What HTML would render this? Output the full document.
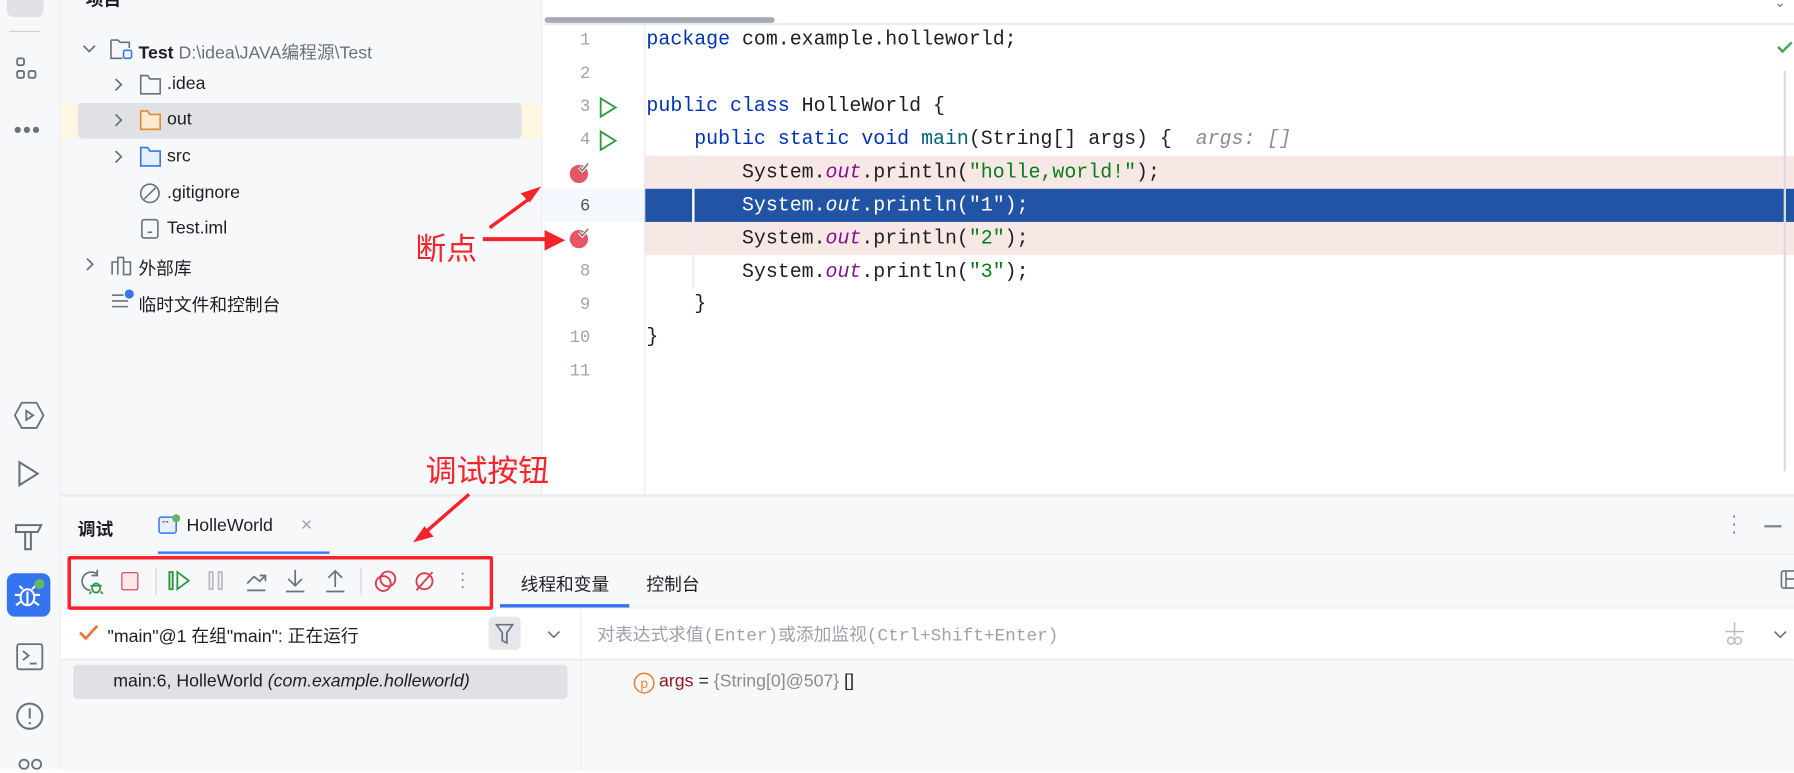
<!DOCTYPE html>
<html><head><meta charset="utf-8"><style>
html,body{margin:0;padding:0;width:1794px;height:769px;overflow:hidden;background:#fff}
#w{position:absolute;left:0;top:0;width:1568px;height:672px;transform:scale(1.14413);transform-origin:0 0;font-family:"Liberation Sans","Noto Sans CJK SC",sans-serif;color:#1e1f22}
.a{position:absolute}
.ui{font-size:15.5px;white-space:nowrap}
.code{font-family:"Liberation Mono","Noto Sans CJK SC",monospace;font-size:17.4px;white-space:pre}
.kw{color:#0033b3}.str{color:#067d17}.it{color:#871094;font-style:italic}
.ln{position:absolute;width:40px;text-align:right;left:476px;font-family:"Liberation Mono",monospace;font-size:15px;color:#a0a4ab}
svg{position:absolute;overflow:visible}
</style></head><body><div id="w">
<!-- left toolbar -->
<div class="a" style="left:0;top:0;width:52px;height:672px;background:#f7f8fa;border-right:1px solid #ebecf0"></div>
<div class="a" style="left:6px;top:-12px;width:32px;height:27px;background:#dfe1e5;border-radius:6px"></div>
<div class="a" style="left:8px;top:27px;width:27px;height:1px;background:#d0d2d6"></div>
<svg style="left:14px;top:50px" width="22" height="22" fill="none" stroke="#6c707e" stroke-width="1.6"><rect x="1" y="1" width="6" height="6" rx="1.5"/><rect x="1" y="12" width="6" height="6" rx="1.5"/><rect x="11" y="12" width="6" height="6" rx="1.5"/></svg>
<div class="a" style="left:12px;top:103px;font-size:20px;color:#6c707e;letter-spacing:1px">•••</div>
<svg style="left:13px;top:351px" width="26" height="24" fill="none" stroke="#6c707e" stroke-width="1.6"><path d="M6 1h13l6 11-6 11H6L0 12z"/><path d="M10 8l6 4-6 4z"/></svg>
<svg style="left:15px;top:403px" width="20" height="22" fill="none" stroke="#6c707e" stroke-width="1.8"><path d="M2 1l16 10L2 21z"/></svg>
<svg style="left:13px;top:455px" width="26" height="26" fill="none" stroke="#6c707e" stroke-width="1.8"><path d="M1 4h22l-3 6H1zM9 10v15h5V10"/></svg>
<div class="a" style="left:6px;top:501px;width:38px;height:38px;background:#3574f0;border-radius:7px"></div>
<svg style="left:13px;top:508px" width="24" height="24" fill="none" stroke="#fff" stroke-width="1.8"><ellipse cx="11" cy="14" rx="6" ry="7"/><path d="M5 12H0M17 12h5M5 18l-4 3M17 18l4 3M7 7L4 4M15 7l3-3M11 9v12"/></svg>
<div class="a" style="left:30px;top:506px;width:9px;height:9px;background:#5fb865;border-radius:50%"></div>
<svg style="left:14px;top:562px" width="24" height="24" fill="none" stroke="#6c707e" stroke-width="1.6"><rect x="1" y="1" width="22" height="22" rx="2"/><path d="M6 7l5 4-5 4M12 18h6"/></svg>
<svg style="left:13px;top:613px" width="26" height="26" fill="none" stroke="#6c707e" stroke-width="1.8"><circle cx="13" cy="13" r="11"/><path d="M13 6v9M13 18v2"/></svg>
<svg style="left:15px;top:662px" width="24" height="14" fill="none" stroke="#6c707e" stroke-width="1.6"><circle cx="6" cy="6" r="4"/><circle cx="17" cy="6" r="4"/></svg>

<!-- project panel -->
<div class="a" style="left:53px;top:0;width:420px;height:432px;background:#f7f8fa;border-right:1px solid #ebecf0"></div>
<div class="a" style="left:53px;top:90px;width:420px;height:31px;background:#fdf7e2"></div>
<div class="a" style="left:68px;top:90px;width:388px;height:31px;background:#dfe1e5;border-radius:4px"></div>
<div class="a ui" style="left:75px;top:-12px;font-weight:bold">项目</div>
<svg style="left:72px;top:38px" width="12" height="10" fill="none" stroke="#6c707e" stroke-width="1.5"><path d="M1 2l5 5 5-5"/></svg>
<svg style="left:96px;top:33px" width="22" height="22" fill="none" stroke="#6c707e" stroke-width="1.4"><path d="M1 2h6l2 2h8v5M1 2v16h10"/><rect x="12" y="11" width="7" height="7" rx="1.5" stroke="#3574f0"/></svg>
<div class="a ui" style="left:121px;top:34px"><b>Test</b> <span style="color:#6c707e">D:\idea\JAVA编程源\Test</span></div>
<svg style="left:99px;top:68px" width="8" height="12" fill="none" stroke="#6c707e" stroke-width="1.5"><path d="M2 1l5 5-5 5"/></svg>
<svg style="left:122px;top:65px" width="20" height="18" fill="none" stroke="#6c707e" stroke-width="1.4"><path d="M1 1h6l2 3h9v13H1z"/></svg>
<div class="a ui" style="left:146px;top:65px">.idea</div>
<svg style="left:99px;top:99px" width="8" height="12" fill="none" stroke="#6c707e" stroke-width="1.5"><path d="M2 1l5 5-5 5"/></svg>
<svg style="left:122px;top:96px" width="20" height="18" fill="#fde8d2" stroke="#e08b2c" stroke-width="1.4"><path d="M1 1h6l2 3h9v13H1z"/></svg>
<div class="a ui" style="left:146px;top:96px">out</div>
<svg style="left:99px;top:131px" width="8" height="12" fill="none" stroke="#6c707e" stroke-width="1.5"><path d="M2 1l5 5-5 5"/></svg>
<svg style="left:122px;top:128px" width="20" height="18" fill="#e7effd" stroke="#3574f0" stroke-width="1.4"><path d="M1 1h6l2 3h9v13H1z"/></svg>
<div class="a ui" style="left:146px;top:128px">src</div>
<svg style="left:122px;top:160px" width="18" height="18" fill="none" stroke="#6c707e" stroke-width="1.4"><circle cx="9" cy="9" r="8"/><path d="M4 14L14 4"/></svg>
<div class="a ui" style="left:146px;top:160px">.gitignore</div>
<svg style="left:123px;top:191px" width="16" height="18" fill="none" stroke="#6c707e" stroke-width="1.4"><rect x="1" y="1" width="14" height="16" rx="2"/><path d="M6 12h4"/></svg>
<div class="a ui" style="left:146px;top:191px">Test.iml</div>
<svg style="left:74px;top:225px" width="8" height="12" fill="none" stroke="#6c707e" stroke-width="1.5"><path d="M2 1l5 5-5 5"/></svg>
<svg style="left:97px;top:223px" width="20" height="18" fill="none" stroke="#6c707e" stroke-width="1.4"><path d="M1 17V6h5v11M6 17V2h5v15M11 17V6h6v11z"/></svg>
<div class="a ui" style="left:121px;top:223px">外部库</div>
<svg style="left:97px;top:252px" width="22" height="20" fill="none" stroke="#6c707e" stroke-width="1.4"><path d="M1 6h10M1 11h14M1 16h14"/><circle cx="16" cy="5" r="4" fill="#3574f0" stroke="none"/></svg>
<div class="a ui" style="left:121px;top:255px">临时文件和控制台</div>

<!-- editor -->
<div class="a" style="left:474px;top:0;width:1094px;height:20px;background:#fff;border-bottom:2px solid #ebecf0"></div>
<div class="a" style="left:476px;top:15px;width:201px;height:5px;background:#a7abb5;border-radius:3px"></div>
<div class="a" style="left:1551px;top:-5px;font-size:12px;color:#6c707e">⌄</div>
<div class="a" style="left:474px;top:165px;width:89px;height:29px;background:#f5f8fe"></div>
<div class="a" style="left:563px;top:136px;width:1005px;height:29px;background:#f7e8e5"></div>
<div class="a" style="left:563px;top:165px;width:1005px;height:29px;background:#2254a5"></div>
<div class="a" style="left:563px;top:194px;width:1005px;height:29px;background:#f7e8e5"></div>
<div class="a" style="left:563px;top:21px;width:1px;height:411px;background:#ebecf0"></div>
<div class="a" style="left:605px;top:136px;width:2px;height:116px;background:#ebecf0"></div>
<div class="a" style="left:605px;top:165px;width:2px;height:29px;background:#fff"></div>
<div class="a" style="left:1559px;top:62px;width:2px;height:350px;background:#dcdcdc"></div>
<svg style="left:1553px;top:35px" width="15" height="12" fill="none" stroke="#4fa35a" stroke-width="2.2"><path d="M1 6l4 4 8-8"/></svg>

<div class="ln" style="top:27px">1</div><div class="ln" style="top:56px">2</div><div class="ln" style="top:85px">3</div><div class="ln" style="top:114px">4</div>
<div class="ln" style="top:172px;color:#4d5160">6</div><div class="ln" style="top:229px">8</div><div class="ln" style="top:258px">9</div><div class="ln" style="top:287px">10</div><div class="ln" style="top:316px">11</div>
<svg style="left:524px;top:85px" width="16" height="18" fill="none" stroke="#2d9a41" stroke-width="1.6"><path d="M1 1l13 8L1 17z"/></svg>
<svg style="left:524px;top:114px" width="16" height="18" fill="none" stroke="#2d9a41" stroke-width="1.6"><path d="M1 1l13 8L1 17z"/></svg>
<svg style="left:497px;top:141px" width="20" height="20"><circle cx="9" cy="11" r="8" fill="#e55765"/><path d="M9 5l3 3 5-6" fill="none" stroke="#fff" stroke-width="3"/><path d="M9 5l3 3 5-6" fill="none" stroke="#6c707e" stroke-width="1.3"/></svg>
<svg style="left:497px;top:198px" width="20" height="20"><circle cx="9" cy="11" r="8" fill="#e55765"/><path d="M9 5l3 3 5-6" fill="none" stroke="#fff" stroke-width="3"/><path d="M9 5l3 3 5-6" fill="none" stroke="#6c707e" stroke-width="1.3"/></svg>

<div class="a code" style="left:565px;top:26px"><span class="kw">package</span> com.example.holleworld;</div>
<div class="a code" style="left:565px;top:84px"><span class="kw">public class</span> HolleWorld {</div>
<div class="a code" style="left:565px;top:113px">    <span class="kw">public static void</span> <span style="color:#00627a">main</span>(String[] args) {  <span style="color:#8c8c8c;font-style:italic">args: []</span></div>
<div class="a code" style="left:565px;top:142px">        System.<span class="it">out</span>.println(<span class="str">"holle,world!"</span>);</div>
<div class="a code" style="left:565px;top:171px;color:#fff">        System.<i>out</i>.println("1");</div>
<div class="a code" style="left:565px;top:200px">        System.<span class="it">out</span>.println(<span class="str">"2"</span>);</div>
<div class="a code" style="left:565px;top:229px">        System.<span class="it">out</span>.println(<span class="str">"3"</span>);</div>
<div class="a code" style="left:565px;top:257px">    }</div>
<div class="a code" style="left:565px;top:286px">}</div>

<!-- bottom panel -->
<div class="a" style="left:53px;top:432px;width:1515px;height:240px;background:#f7f8fa;border-top:2px solid #ebecf0"></div>
<div class="a ui" style="left:68px;top:451px;font-weight:bold">调试</div>
<svg style="left:138px;top:450px" width="20" height="18" fill="#e7effd" stroke="#3574f0" stroke-width="1.3"><rect x="1" y="2" width="15" height="14" rx="2"/><path d="M4 6h2M7 6h2" stroke="#6c707e"/><circle cx="16" cy="3" r="3.5" fill="#5fb865" stroke="none"/></svg>
<div class="a ui" style="left:163px;top:451px">HolleWorld</div>
<div class="a" style="left:263px;top:449px;font-size:17px;color:#9ea1a8">×</div>
<div class="a" style="left:138px;top:482px;width:150px;height:3px;background:#3574f0"></div>
<div class="a" style="left:1513px;top:448px;font-size:16px;color:#6c707e;line-height:7px">·<br>·<br>·</div>
<div class="a" style="left:1542px;top:459px;width:15px;height:2px;background:#818594"></div>
<div class="a" style="left:53px;top:484px;width:1515px;height:1px;background:#ebecf0"></div>
<div class="a" style="left:53px;top:531px;width:1515px;height:1px;background:#ebecf0"></div>
<div class="a ui" style="left:455px;top:499px">线程和变量</div>
<div class="a ui" style="left:565px;top:499px">控制台</div>
<div class="a" style="left:437px;top:528px;width:113px;height:3px;background:#3574f0"></div>
<svg style="left:1556px;top:498px" width="14" height="18" fill="none" stroke="#6c707e" stroke-width="1.4"><rect x="1" y="1" width="14" height="15" rx="2"/><path d="M5 1v15M5 8h9"/></svg>

<!-- debug toolbar icons -->
<svg style="left:70px;top:498px" width="22" height="22" fill="none" stroke="#6c707e" stroke-width="1.5"><path d="M15 4A8 8 0 1 0 9 18"/><path d="M15 0v5h-5"/><ellipse cx="14" cy="16" rx="3.5" ry="4" stroke="#2d9a41"/><path d="M9 14h10M10 19l-2 2M18 19l2 2" stroke="#2d9a41"/></svg>
<div class="a" style="left:106px;top:500px;width:13px;height:14px;border:1.6px solid #db3b4b;border-radius:2px;background:#fde8ea"></div>
<div class="a" style="left:136px;top:496px;width:1px;height:24px;background:#d3d5db"></div>
<svg style="left:147px;top:499px" width="20" height="18" fill="none" stroke="#2d9a41" stroke-width="1.6"><rect x="1" y="1" width="3" height="15" fill="#cfe8d4"/><path d="M8 1l10 7.5L8 16z"/></svg>
<svg style="left:182px;top:499px" width="14" height="18" fill="none" stroke="#b6b9c0" stroke-width="1.5"><rect x="1" y="1" width="3" height="15"/><rect x="9" y="1" width="3" height="15"/></svg>
<svg style="left:215px;top:498px" width="18" height="20" fill="none" stroke="#6c707e" stroke-width="1.5"><path d="M1 18h16M1 12l6-6 5 4 5-5M12 5h5v5"/></svg>
<svg style="left:249px;top:497px" width="18" height="22" fill="none" stroke="#6c707e" stroke-width="1.5"><path d="M1 20h16M9 1v14M3 9l6 6 6-6"/></svg>
<svg style="left:284px;top:497px" width="18" height="22" fill="none" stroke="#6c707e" stroke-width="1.5"><path d="M1 20h16M9 16V2M3 8l6-6 6 6"/></svg>
<div class="a" style="left:315px;top:496px;width:1px;height:24px;background:#d3d5db"></div>
<svg style="left:327px;top:498px" width="20" height="20" fill="none" stroke="#db3b4b" stroke-width="1.6"><circle cx="8" cy="12" r="6.5"/><circle cx="12" cy="8" r="6.5"/></svg>
<svg style="left:361px;top:498px" width="20" height="20" fill="none" stroke="#db3b4b" stroke-width="1.6"><circle cx="10" cy="10" r="7"/><path d="M3 18L17 2"/></svg>
<div class="a" style="left:402px;top:497px;font-size:14px;color:#6c707e;line-height:6px">·<br>·<br>·</div>

<!-- threads row -->
<div class="a" style="left:53px;top:532px;width:1515px;height:44px;background:#fff;border-bottom:1px solid #ebecf0"></div>
<div class="a" style="left:507px;top:532px;width:1px;height:140px;background:#ebecf0"></div>
<svg style="left:69px;top:546px" width="18" height="14" fill="none" stroke="#e8753a" stroke-width="2.4"><path d="M1 7l5 5L16 1"/></svg>
<div class="a ui" style="left:94px;top:544px">"main"@1 在组"main": 正在运行</div>
<div class="a" style="left:427px;top:539px;width:28px;height:29px;background:#e5e7ea;border-radius:4px"></div>
<svg style="left:433px;top:545px" width="16" height="18" fill="none" stroke="#6c707e" stroke-width="1.5"><path d="M1 1h14L10 8v9l-4-2V8z"/></svg>
<svg style="left:478px;top:551px" width="12" height="8" fill="none" stroke="#6c707e" stroke-width="1.4"><path d="M1 1l5 5 5-5"/></svg>
<div class="a" style="left:522px;top:543px;font-family:'Liberation Mono','Noto Sans CJK SC',monospace;font-size:15.5px;color:#9ea1a8;white-space:nowrap">对表达式求值(Enter)或添加监视(Ctrl+Shift+Enter)</div>
<svg style="left:1507px;top:544px" width="18" height="22" fill="none" stroke="#b6b9c0" stroke-width="1.3"><path d="M9 0v12M1 8h16"/><circle cx="6" cy="16" r="3"/><circle cx="12" cy="16" r="3"/></svg>
<svg style="left:1550px;top:551px" width="12" height="8" fill="none" stroke="#6c707e" stroke-width="1.4"><path d="M1 1l5 5 5-5"/></svg>

<div class="a" style="left:64px;top:581px;width:432px;height:30px;background:#dfe1e5;border-radius:4px"></div>
<div class="a ui" style="left:99px;top:587px">main:6, HolleWorld <i>(com.example.holleworld)</i></div>
<svg style="left:553px;top:587px" width="20" height="20" fill="none" stroke="#e8853a" stroke-width="1.4"><circle cx="10" cy="10" r="8.5"/><text x="10" y="14.5" text-anchor="middle" font-size="12" fill="#e8853a" stroke="none" font-family="Liberation Sans">p</text></svg>
<div class="a ui" style="left:576px;top:587px"><span style="color:#871b1b">args</span> = <span style="color:#8c8c8c">{String[0]@507}</span> []</div>

<!-- annotations -->
<div class="a" style="left:59px;top:486px;width:366px;height:41px;border:3px solid #f5232a;border-radius:2px"></div>
<div class="a" style="left:363px;top:196px;font-size:27px;color:#f5232a;font-family:'Noto Sans CJK SC',sans-serif">断点</div>
<div class="a" style="left:372px;top:390px;font-size:27px;color:#f5232a;font-family:'Noto Sans CJK SC',sans-serif">调试按钮</div>
<svg style="left:0;top:0" width="1" height="1">
<path d="M428 199L465 172" stroke="#f5232a" stroke-width="3"/><path d="M473 163l-18 6 8 8z" fill="#f5232a"/>
<path d="M422 209L478 209" stroke="#f5232a" stroke-width="3.5"/><path d="M494 210l-18-9v18z" fill="#f5232a"/>
<path d="M410 432L372 465" stroke="#f5232a" stroke-width="3"/><path d="M361 474l18-5-8-9z" fill="#f5232a"/>
</svg>
</div></body></html>
